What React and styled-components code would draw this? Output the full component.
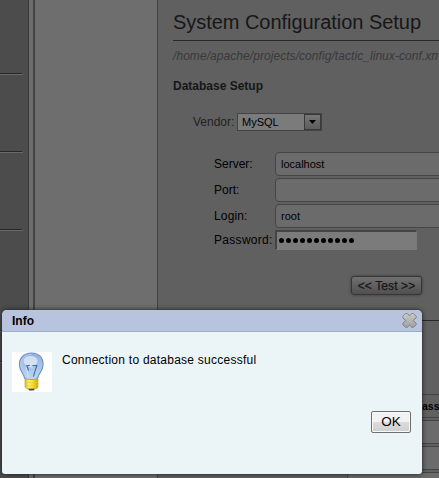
import React from "react";
import styled, { createGlobalStyle } from "styled-components";

const GlobalStyle = createGlobalStyle`
  * { box-sizing: border-box; }
  body {
    margin: 0;
    overflow: hidden;
    font-family: "Liberation Sans", Arial, sans-serif;
    font-size: 12px;
    color: #000;
  }
`;

const Page = styled.div`
  position: relative;
  display: flex;
  width: 439px;
  height: 478px;
  overflow: hidden;
  background: #6e6e6e;
`;

const Sidebar = styled.div`
  flex: none;
  width: 29px;
  background: #4c4c4c;
  border-right: 1px solid #393939;
`;

const SidebarItem = styled.div`
  width: 23px;
  height: ${(p) => p.$height}px;
  border-bottom: 1px solid #6a6a6a;
  display: flex;
  align-items: flex-end;
  &::after {
    content: "";
    width: 22px;
    height: 1px;
    background: #272727;
  }
`;

const Splitter = styled.div`
  flex: none;
  width: 6px;
  background: #6e6e6e;
  border-right: 2px solid #444;
`;

const Gutter = styled.div`
  flex: none;
  width: 122px;
  background: #6e6e6e;
`;

const Content = styled.main`
  flex: none;
  width: 350px;
  padding: 10px 0 0 15px;
  border-left: 1px solid #434343;
  background: #606060;
`;

const Title = styled.h1`
  margin: 0;
  height: 31px;
  border-bottom: 1px solid #292929;
  font-size: 20px;
  line-height: 24px;
  font-weight: 400;
  letter-spacing: -0.04px;
  color: #171717;
  white-space: nowrap;
`;

const ConfigPath = styled.div`
  margin-top: 7px;
  height: 16px;
  line-height: 16px;
  font-style: italic;
  letter-spacing: 0.06px;
  color: #393939;
  white-space: nowrap;
`;

const SectionTitle = styled.h2`
  margin: 14px 0 0;
  font-size: 12px;
  line-height: 16px;
  color: #171717;
`;

const VendorRow = styled.div`
  display: flex;
  align-items: center;
  gap: 4px;
  margin: 19px 0 0 20px;
  height: 18px;
  color: #222;
`;

const VendorLabel = styled.span`
  width: 40px;
  white-space: nowrap;
`;

const Select = styled.div`
  display: flex;
  justify-content: space-between;
  width: 85px;
  height: 18px;
  padding: 0 0 0 4px;
  border: 1px solid #434343;
  background: #7b7b7b;
  font-size: 11px;
  line-height: 17px;
  color: #000;
`;

const SelectArrow = styled.span`
  display: flex;
  align-items: center;
  justify-content: center;
  width: 17px;
  border: 1px solid #393939;
  background: linear-gradient(#767676, #5d5d5d);
`;

const Form = styled.div`
  display: grid;
  grid-template-columns: 61px 1fr;
  row-gap: 2px;
  margin: 21px 0 0 41px;
`;

const FieldLabel = styled.label`
  align-self: center;
  line-height: 16px;
  letter-spacing: ${(p) => p.$tracking || 0}px;
  white-space: nowrap;
`;

const Field = styled.div`
  width: 180px;
  height: 24px;
  padding-left: 5px;
  border: 1px solid #454545;
  border-radius: 4px;
  background: #6b6b6b;
  font-size: 11px;
  line-height: 23px;
`;

const PasswordField = styled.div`
  display: flex;
  align-items: center;
  gap: 2px;
  width: 142px;
  height: 20px;
  padding: 0 0 1px 2px;
  border: 1px solid #7b7b7b;
  border-top: 2px solid #444;
  border-left: 2px solid #444;
  background: #7b7b7b;
`;

const Dot = styled.span`
  width: 5px;
  height: 5px;
  border-radius: 50%;
  background: #000;
`;

const TestButton = styled.div`
  width: 71px;
  height: 19px;
  margin: 26px 0 0 178px;
  border: 1px solid #363636;
  border-radius: 3px;
  background: linear-gradient(#707070, #505050);
  box-shadow: 0 0 3px #393939;
  line-height: 18px;
  letter-spacing: 0.1px;
  text-align: center;
  color: #171717;
  -webkit-text-stroke: 0.25px #171717;
  white-space: nowrap;
`;

const Rule = styled.div`
  height: 1px;
  margin-top: 25px;
  background: #292929;
`;

const Table = styled.div`
  display: flex;
  flex-direction: column;
  gap: 2px;
  margin: 73px 0 0 174px;
`;

const TableCell = styled.div`
  height: 24px;
  padding-left: 67px;
  border: 1px solid #434343;
  border-radius: ${(p) => (p.$header ? 0 : 4)}px;
  background: ${(p) => (p.$header ? "#606060" : "#6b6b6b")};
  font-size: 10.5px;
  font-weight: 700;
  line-height: 23px;
`;

const Dialog = styled.section`
  position: absolute;
  left: 2px;
  top: 310px;
  width: 420px;
  height: 164px;
  border-radius: 5px 5px 3px 3px;
  overflow: hidden;
  background: #ebf4f7;
  box-shadow: 0 0 5px #191919;
`;

const DialogHeader = styled.header`
  display: flex;
  justify-content: space-between;
  height: 22px;
  padding: 0 5px 0 10px;
  border-bottom: 1px solid #9facc9;
  background: #b8c4dd;
  font-weight: 700;
  line-height: 22px;
`;

const CloseIcon = styled.svg`
  margin-top: 3px;
`;

const Message = styled.div`
  display: flex;
  gap: 10px;
  padding: 20px 10px 0;
`;

const IconTile = styled.div`
  width: 40px;
  height: 40px;
  background: #fff;
`;

const MessageText = styled.p`
  margin: 0;
  line-height: 16px;
  letter-spacing: 0.25px;
`;

const Actions = styled.div`
  display: flex;
  justify-content: flex-end;
  padding: 19px 11px 0 0;
`;

const OkButton = styled.button`
  width: 40px;
  height: 22px;
  padding: 0;
  border: 1px solid #707070;
  border-radius: 2px;
  box-shadow: inset 0 0 0 1px #f8f8f8;
  background: linear-gradient(#f2f2f2 0 48%, #dcdcdc 50%, #cfcfcf);
  font: 13.5px "Liberation Sans", Arial, sans-serif;
  line-height: 20px;
  color: #000;
`;

const Bulb = () => (
  <svg width="40" height="40" viewBox="0 0 40 40">
    <defs>
      <linearGradient id="glass" x1="0" y1="0" x2="0" y2="1">
        <stop offset="0" stopColor="#91b1dd" />
        <stop offset="1" stopColor="#bed6f2" />
      </linearGradient>
      <linearGradient id="brass" x1="0" y1="0" x2="1" y2="0">
        <stop offset="0" stopColor="#d8bb13" />
        <stop offset=".3" stopColor="#fff17b" />
        <stop offset=".6" stopColor="#f8e02b" />
        <stop offset="1" stopColor="#c9a711" />
      </linearGradient>
    </defs>
    <path d="M19.5 1C12 1 7 6.2 7.4 13c.2 5 2.6 7.2 4.1 10 .9 1.8.6 3.4 2.1 3.9 2.3.8 8.7.8 11 0 1.4-.5 1.3-2.1 2.2-3.9 1.5-2.8 4.1-5 4.3-10C31.5 6.2 27 1 19.5 1Z" fill="url(#glass)" stroke="#6b8fc5" strokeWidth="1.1" />
    <path d="M19.5 2.4C13 2.4 8.8 7 9 12.7c.2 4 2.7 5.7 4.1 8.8l1.8 4" fill="none" stroke="#b9d0ee" />
    <ellipse cx="18.5" cy="9" rx="7" ry="5" fill="#e6eff9" opacity=".72" />
    <path d="M16.3 25 14.4 15l3.1-.9 2.1 1.1 2.9-1.3 2.2.7L21.6 25" fill="none" stroke="#d3e3f6" strokeWidth="1.2" />
    <path d="M16.6 18.5 14.8 14l3-.6m2.7.3h4.3l-1.3 4-2.1 7" fill="none" stroke="#426ba7" strokeWidth="1.2" />
    <path d="M13 26.8c3.5 1.1 9.5 1.1 13 0v8.4l-2 1.6h-9l-2-1.6Z" fill="url(#brass)" stroke="#c8a81d" strokeWidth=".7" />
    <path d="M13 30c4 1 9 1 13 0M13 33.2c4 1 9 1 13 0" fill="none" stroke="#e5c929" strokeWidth=".8" />
    <path d="M16 36.7h7l-1.4 1.8h-4.2Z" fill="#4b4b43" />
  </svg>
);

const Close = () => (
  <CloseIcon width="15" height="15" viewBox="0 0 15 15">
    <defs>
      <linearGradient id="steel" x1="0" y1="0" x2="0" y2="1">
        <stop offset="0" stopColor="#c9c9c9" />
        <stop offset="1" stopColor="#a1a1a1" />
      </linearGradient>
    </defs>
    <path d="M3.6.6h1.7l2.2 2.2L9.7.6h1.7l2.8 2.8v1.2L11.4 7.5l2.8 2.9v1.2l-2.8 2.6H9.7l-2.2-2.1-2.2 2.1H3.6L.8 11.6v-1.2l2.8-2.9L.8 4.6V3.4Z" fill="url(#steel)" stroke="#7d7d7d" strokeLinejoin="round" />
    <path d="m3.9 1.8-1.8 1.8m9-1.8-1-.1" fill="none" stroke="#e1e1e1" strokeWidth=".8" />
  </CloseIcon>
);

export default function App() {
  return (
    <>
      <GlobalStyle />
      <Page>
        <Sidebar>
          {[75, 78, 78, 101, 31].map((height, i) => (
            <SidebarItem key={i} $height={height} />
          ))}
        </Sidebar>
        <Splitter />
        <Gutter />
        <Content>
          <Title>System Configuration Setup</Title>
          <ConfigPath>/home/apache/projects/config/tactic_linux-conf.xml</ConfigPath>
          <SectionTitle>Database Setup</SectionTitle>
          <VendorRow>
            <VendorLabel>Vendor:</VendorLabel>
            <Select>
              MySQL
              <SelectArrow>
                <svg width="7" height="4" viewBox="0 0 7 4">
                  <path d="M0 0h7L3.5 4Z" />
                </svg>
              </SelectArrow>
            </Select>
          </VendorRow>
          <Form>
            <FieldLabel>Server:</FieldLabel>
            <Field>localhost</Field>
            <FieldLabel>Port:</FieldLabel>
            <Field />
            <FieldLabel $tracking={0.15}>Login:</FieldLabel>
            <Field>root</Field>
            <FieldLabel $tracking={0.3}>Password:</FieldLabel>
            <PasswordField>
              {Array.from({ length: 11 }, (_, i) => (
                <Dot key={i} />
              ))}
            </PasswordField>
          </Form>
          <TestButton>&lt;&lt; Test &gt;&gt;</TestButton>
          <Rule />
          <Table>
            <TableCell $header>Password</TableCell>
            <TableCell />
            <TableCell />
            <TableCell />
          </Table>
        </Content>
        <Dialog>
          <DialogHeader>
            Info
            <Close />
          </DialogHeader>
          <Message>
            <IconTile>
              <Bulb />
            </IconTile>
            <MessageText>Connection to database successful</MessageText>
          </Message>
          <Actions>
            <OkButton>OK</OkButton>
          </Actions>
        </Dialog>
      </Page>
    </>
  );
}
